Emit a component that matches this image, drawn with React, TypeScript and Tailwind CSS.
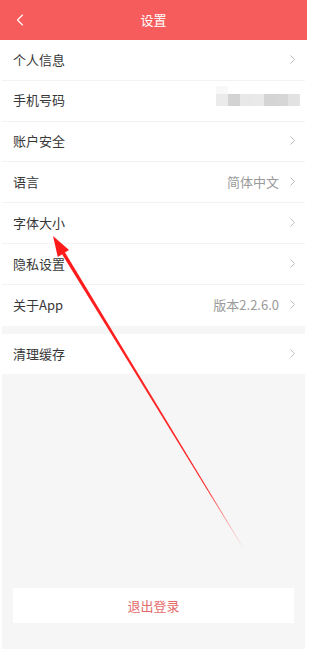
import { ChevronLeft } from "lucide-react";

const rows = [
  { label: "个人信息" },
  { label: "手机号码", phone: true },
  { label: "账户安全" },
  { label: "语言", value: "简体中文" },
  { label: "字体大小" },
  { label: "隐私设置" },
  { label: "关于App", value: "版本2.2.6.0" },
];

const mosaic = ["bg-[#ebebeb]", "bg-[#d3d3d3]", "bg-[#e8e8e8]", "bg-[#e9e9e9]", "bg-[#d4d4d4]", "bg-[#d6d6d6]", "bg-[#e2e2e2]"];

function Chevron() {
  return (
    <svg width="5" height="9" viewBox="0 0 5 9" className="shrink-0">
      <polyline points="0.5,0.5 4.5,4.5 0.5,8.5" fill="none" stroke="#bdbdbd" strokeWidth="1" />
    </svg>
  );
}

function Row({ label, value, phone, last }: { label: string; value?: string; phone?: boolean; last?: boolean }) {
  return (
    <div className={`h-[40.8px] flex items-center pl-[11px] pr-[10px] pb-[1px] bg-white ${last ? "" : "border-b border-[#f3f3f3]"}`}>
      <span className="flex-1 text-[13px] text-[#383838]">{label}</span>
      {phone ? (
        <div className="relative flex -mr-[5px]">
          <div className="absolute -top-2 left-0 w-3 h-2 bg-[#f8f8f8]" />
          {mosaic.map((c, i) => (
            <div key={i} className={`w-3 h-3 ${c}`} />
          ))}
        </div>
      ) : (
        <>
          {value && <span className="text-[13px] text-[#9a9a9a] mr-[11px]">{value}</span>}
          <Chevron />
        </>
      )}
    </div>
  );
}

export default function App() {
  return (
    <div className="relative w-[307px] h-[649px] bg-white font-['Noto_Sans_CJK_SC','Noto_Sans',sans-serif] flex flex-col overflow-hidden">
      {/* HEADER */}
      <div className="h-[40px] bg-[#f65c5c] flex items-center relative shrink-0">
        <ChevronLeft className="absolute left-[10px] w-[20px] h-[20px] text-white" strokeWidth={1.3} />
        <span className="flex-1 text-center text-[13px] text-white">设置</span>
      </div>

      <div className="flex-1 mx-[2px] bg-[#f6f6f6] flex flex-col">
        {rows.map((r, i) => (
          <Row key={r.label} {...r} last={i === rows.length - 1} />
        ))}
        <div className="h-[8px] shrink-0" />
        <Row label="清理缓存" last />
        <div className="flex-1" />
        <div className="mx-[11px] mb-[26px] h-[35px] bg-white flex items-center justify-center">
          <span className="text-[13px] text-[#e46a6a]">退出登录</span>
        </div>
      </div>

      {/* annotation arrow */}
      <svg className="absolute inset-0 pointer-events-none" width="307" height="649" viewBox="0 0 307 649">
        <defs>
          <linearGradient id="fade" gradientUnits="userSpaceOnUse" x1="60" y1="250" x2="243" y2="548">
            <stop offset="0" stopColor="#ff1a1a" />
            <stop offset="0.8" stopColor="#ff2a2a" />
            <stop offset="1" stopColor="#ff2a2a" stopOpacity="0.1" />
          </linearGradient>
        </defs>
        <polygon points="61.9,254.1 64.9,252.3 243.2,547.5 242.8,547.7" fill="url(#fade)" />
        <polygon points="53,236 69,250 57.8,257" fill="#ff1a1a" />
      </svg>
    </div>
  );
}
